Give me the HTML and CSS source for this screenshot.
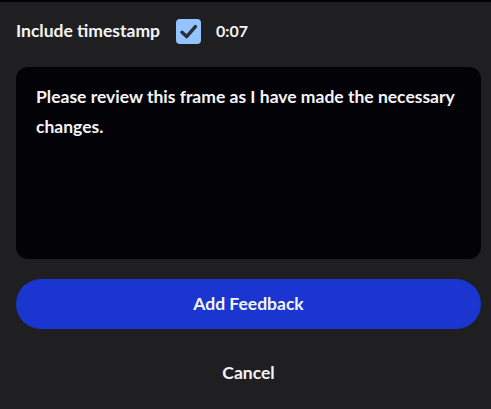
FILE: index.html
```html
<!DOCTYPE html>
<html>
<head>
<meta charset="utf-8">
<link rel="stylesheet" href="styles.css">
</head>
<body>
<div class="panel">
  <div class="row">
    <span class="label">Include timestamp</span>
    <span class="checkbox">
      <svg width="25" height="25" viewBox="0 0 25 25"><path d="M6 13.2 L10.6 17.6 L19.4 7.6" fill="none" stroke="#2a2f3a" stroke-width="3.4" stroke-linecap="round" stroke-linejoin="round"/></svg>
    </span>
    <span class="time">0:07</span>
  </div>
  <div class="textbox">Please review this frame as I have made the necessary changes.</div>
  <button class="primary">Add Feedback</button>
  <button class="cancel">Cancel</button>
</div>
</body>
</html>
```
FILE: styles.css
```css
html, body {
  margin: 0;
  padding: 0;
  background: #1f1f21;
}
body {
  border-top: 2px solid #000;
  font-family: Lato, "Open Sans", sans-serif;
  font-weight: 700;
  color: #f4f4f6;
}
.panel {
  padding: 17px 10px 0 16px;
  display: flex;
  flex-direction: column;
}
.row {
  display: flex;
  align-items: center;
  height: 25px;
  font-size: 17.5px;
}
.label {
  margin-right: 16px;
  padding-bottom: 3px;
}
.checkbox {
  width: 25px;
  height: 25px;
  border-radius: 4px;
  background: #93c4ff;
  display: block;
}
.checkbox svg { display: block; }
.time {
  margin-left: 15px;
  font-size: 16px;
  padding-bottom: 3px;
}
.textbox {
  margin-top: 23px;
  height: 192px;
  box-sizing: border-box;
  background: #030206;
  border-radius: 12px;
  padding: 14.5px 20px;
  font-size: 17.5px;
  line-height: 30px;
}
button {
  font-family: inherit;
  font-weight: 700;
  font-size: 17.5px;
  color: #f4f4f6;
  border: none;
  cursor: pointer;
  padding: 0 0 1px;
}
.primary {
  margin-top: 20px;
  height: 50px;
  border-radius: 25px;
  background: #1a35d0;
}
.cancel {
  margin-top: 18.5px;
  height: 50px;
  background: transparent;
  padding-bottom: 0;
}
```
